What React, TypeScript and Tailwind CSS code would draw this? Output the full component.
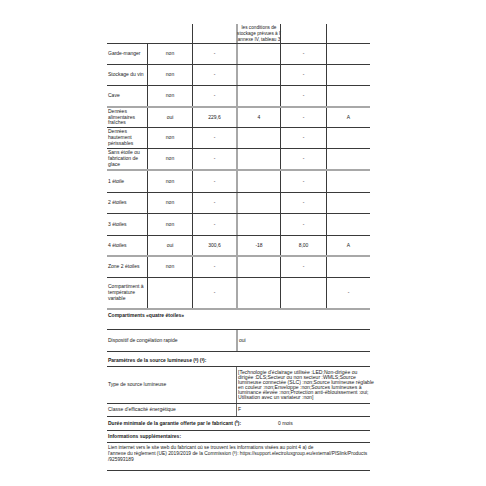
import type { ReactNode } from 'react';

type Row = {
  label: ReactNode;
  has: string;
  vol: string;
  temp: string;
  cap: string;
  cls: string;
  h: string;
};

const thin = 'border-b border-[#3a3a3a]';
const thick = 'border-b-2 border-[#a8a8a8]';

const rows: Row[] = [
  { label: 'Garde-manger', has: 'non', vol: '-', temp: '', cap: '-', cls: '', h: `h-[21px] ${thin}` },
  { label: 'Stockage du vin', has: 'non', vol: '-', temp: '', cap: '-', cls: '', h: `h-[21px] ${thin}` },
  { label: 'Cave', has: 'non', vol: '-', temp: '', cap: '-', cls: '', h: `h-[22px] ${thick}` },
  { label: <>Denrées<br />alimentaires<br />fraîches</>, has: 'oui', vol: '229,6', temp: '4', cap: '-', cls: 'A', h: `h-[20px] ${thin}` },
  { label: <>Denrées<br />hautement<br />périssables</>, has: 'non', vol: '-', temp: '', cap: '-', cls: '', h: `h-[21px] ${thin}` },
  { label: <>Sans étoile ou<br />fabrication de<br />glace</>, has: 'non', vol: '-', temp: '', cap: '-', cls: '', h: `h-[22px] ${thick}` },
  { label: '1 étoile', has: 'non', vol: '-', temp: '', cap: '-', cls: '', h: `h-[22px] ${thin}` },
  { label: '2 étoiles', has: 'non', vol: '-', temp: '', cap: '-', cls: '', h: `h-[21px] ${thin}` },
  { label: '3 étoiles', has: 'non', vol: '-', temp: '', cap: '-', cls: '', h: `h-[22px] ${thin}` },
  { label: '4 étoiles', has: 'oui', vol: '300,6', temp: '-18', cap: '8,00', cls: 'A', h: `h-[21px] ${thick}` },
  { label: 'Zone 2 étoiles', has: 'non', vol: '-', temp: '', cap: '-', cls: '', h: `h-[21px] ${thin}` },
  { label: <>Compartiment à<br />température<br />variable</>, has: '', vol: '-', temp: '', cap: '', cls: '-', h: `h-[32px] ${thick}` },
];

const lightLines = [
  "[Technologie d'éclairage utilisée :LED;Non-dirigée ou",
  'dirigée :DLS;Secteur ou non secteur :WMLS;Source',
  'lumineuse connectée (SLC) :non;Source lumineuse réglable',
  'en couleur :non;Enveloppe :non;Sources lumineuses à',
  'luminance élevée :non;Protection anti-éblouissement :oui;',
  'Utilisation avec un variateur :non]',
];

const grid = 'grid grid-cols-[40px_45px_44px_44px_46px_44px]';
const vline = 'border-l border-[#3a3a3a]';
const vthick = 'border-l-2 border-[#a8a8a8]';

const Note = ({ n }: { n: string }) => <sup className="text-[3px]">{n}</sup>;

export default function App() {
  return (
    <div
      className="w-[486px] h-[486px] bg-white text-[#1a1a1a] text-[5px] leading-[5.8px] overflow-hidden"
      style={{ fontFamily: '"Liberation Sans", Arial, sans-serif' }}
    >
      <div className="ml-[107px] mt-[24px] w-[263px]">
        {/* header row */}
        <div className={`${grid} h-[20px] ${thin}`}>
          <div className="col-span-2" />
          <div className={vline} />
          <div className={`${vthick} flex flex-col items-center justify-center text-[4.7px] leading-[6px]`}>
            <span className="whitespace-nowrap">les conditions de</span>
            <span className="whitespace-nowrap">stockage prévues à l'</span>
            <span className="whitespace-nowrap">annexe IV, tableau 3</span>
          </div>
          <div className={vline} />
          <div className={vline} />
        </div>

        {rows.map((r, i) => (
          <div key={i} className={`${grid} ${r.h}`}>
            <div className="flex items-center pl-px">
              <span className="whitespace-nowrap">{r.label}</span>
            </div>
            <div className={`${vline} flex items-center justify-center`}>{r.has}</div>
            <div className={`${vline} flex items-center justify-center`}>{r.vol}</div>
            <div className={`${vthick} flex items-center justify-center`}>{r.temp}</div>
            <div className={`${vline} flex items-center justify-center`}>{r.cap}</div>
            <div className={`${vline} flex items-center justify-center`}>{r.cls}</div>
          </div>
        ))}

        {/* Compartiments quatre étoiles */}
        <div className={`h-[20px] ${thin} pl-px pt-[3px] font-bold`}>Compartiments «quatre étoiles»</div>
        <div className={`grid grid-cols-[129px_134px] h-[22px] ${thin}`}>
          <div className="flex items-center pl-px">Dispositif de congélation rapide</div>
          <div className={`${vthick} flex items-center pl-px`}>oui</div>
        </div>

        {/* Source lumineuse */}
        <div className={`h-[15px] ${thin} pl-px flex items-end pb-[2px] font-bold`}>
          <span>
            Paramètres de la source lumineuse (<Note n="8" />) (<Note n="9" />):
          </span>
        </div>
        <div className={`grid grid-cols-[129px_134px] h-[37px] ${thin}`}>
          <div className="flex items-center pl-px">Type de source lumineuse</div>
          <div className="border-l border-[#6a6a6a] flex flex-col justify-center pl-px leading-[5px] text-[5.1px]">
            {lightLines.map((l) => (
              <span key={l} className="whitespace-nowrap">
                {l}
              </span>
            ))}
          </div>
        </div>
        <div className={`grid grid-cols-[129px_134px] h-[13px] ${thin}`}>
          <div className="flex items-center pl-px">Classe d'efficacité énergétique</div>
          <div className="border-l border-[#6a6a6a] flex items-center pl-px">F</div>
        </div>

        {/* Garantie */}
        <div className={`h-[14px] ${thin} pl-px flex items-center`}>
          <span className="font-bold w-[170px] whitespace-nowrap">
            Durée minimale de la garantie offerte par le fabricant (<Note n="9" />):
          </span>
          <span>0 mois</span>
        </div>

        {/* Informations */}
        <div className={`h-[12px] ${thin} pl-px flex items-center font-bold`}>Informations supplémentaires:</div>
        <div className={`h-[28px] ${thin} pl-px pt-[2px] leading-[6px] text-[4.85px]`}>
          <div className="whitespace-nowrap">
            Lien internet vers le site web du fabricant où se trouvent les informations visées au point 4 a) de
          </div>
          <div className="whitespace-nowrap">
            l'annexe du règlement (UE) 2019/2019 de la Commission (<Note n="9" />):
            https://support.electroluxgroup.eu/external/PISlink/Products
          </div>
          <div>/925993189</div>
        </div>
      </div>
    </div>
  );
}
